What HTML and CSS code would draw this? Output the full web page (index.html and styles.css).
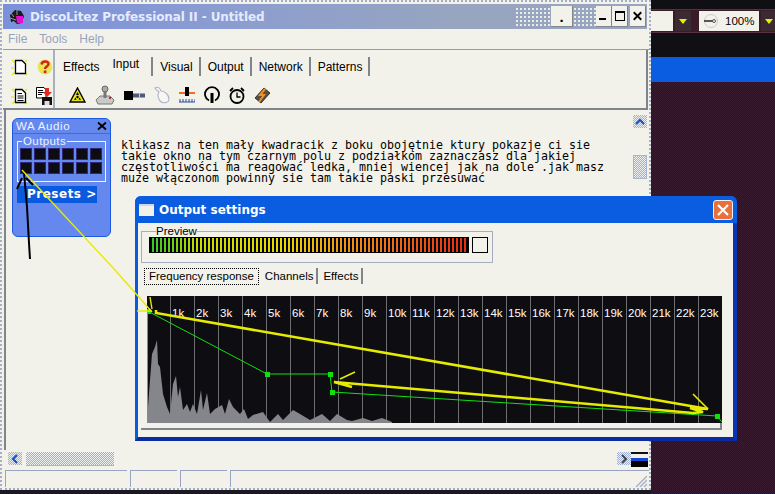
FILE: index.html
```html
<!DOCTYPE html>
<html lang="en">
<head>
    <meta charset="UTF-8">
    <title>DiscoLitez Professional II - Untitled</title>
    <link rel="stylesheet" href="styles.css">
</head>
<body>
<div class="page">
    <div class="app">
        <div class="titlebar">
            <svg class="app-icon" width="18" height="18" viewBox="0 0 18 18">
                <path d="M2 7 L7 2 L13 3 L16 8 L14 15 L9 16 L6 13 L3 14 Z" fill="#1a1a1a"/>
                <path d="M8 8 h7 v7 h-6 z" fill="#e010d0"/>
                <path d="M3 5 L6 9 M9 2 V7 M2 10 L8 12" stroke="#999" stroke-width="1"/>
            </svg>
            <span class="app-title">DiscoLitez Professional II - Untitled</span>
            <span class="dots dots-a"></span>
            <span class="win-btn win-help">.</span>
            <span class="dots dots-b"></span>
            <span class="win-btn win-ctl">
                <svg width="15" height="20" viewBox="0 0 15 20"><rect x="3" y="12" width="7" height="2" fill="#000"/></svg>
            </span>
            <span class="win-btn win-ctl">
                <svg width="15" height="20" viewBox="0 0 15 20"><rect x="3.500" y="5.500" width="9" height="9" fill="none" stroke="#000"/><rect x="3" y="5" width="10" height="2" fill="#000"/></svg>
            </span>
            <span class="win-btn win-ctl win-close">
                <svg width="16" height="20" viewBox="0 0 16 20"><path d="M4 6 L12 14 M12 6 L4 14" stroke="#000" stroke-width="2"/></svg>
            </span>
        </div>

        <div class="menubar">
            <span>File</span><span>Tools</span><span>Help</span>
        </div>

        <div class="toolbar">
            <div class="quick">
                <svg width="18" height="20" viewBox="0 0 18 20">
                    <path d="M1 3 L4 6 M16 3 L14 5 M0 11 H3 M1 18 L4 15 M16 18 L14 15" stroke="#e4ea20" stroke-width="1.500"/>
                    <path d="M4.500 3.500 H11 L14.500 7 V16.500 H4.500 Z" fill="#fff" stroke="#000" stroke-width="1.300"/>
                </svg>
                <svg width="16" height="18" viewBox="0 0 16 18">
                    <circle cx="8" cy="9" r="7.500" fill="#e6e85a"/>
                    <path d="M4.500 6.500 C5 2.500 11.500 2.500 11.500 6 C11.500 8.500 8 8.500 8 11" fill="none" stroke="#d8201c" stroke-width="2.400"/>
                    <rect x="6.800" y="12.500" width="2.600" height="2.600" fill="#d8201c"/>
                </svg>
                <svg width="18" height="20" viewBox="0 0 18 20">
                    <path d="M1 3 L4 6 M16 3 L14 5 M0 11 H3 M1 18 L4 15 M16 18 L14 15" stroke="#e4ea20" stroke-width="1.500"/>
                    <path d="M4.500 3.500 H11 L14.500 7 V16.500 H4.500 Z" fill="#fff" stroke="#000" stroke-width="1.300"/>
                    <path d="M6.500 7.500 H11 M6.500 10 H12.500 M6.500 12 H12.500 M6.500 14.500 H12.500" stroke="#000"/>
                </svg>
                <svg width="19" height="20" viewBox="0 0 19 20">
                    <path d="M1.500 1.500 H9 L11 4 V12 H1.500 Z" fill="#fff" stroke="#000"/>
                    <path d="M3 4.500 H8 M3 6.500 H9 M3 8.500 H7" stroke="#000"/>
                    <rect x="7" y="11" width="10" height="8" fill="#111"/>
                    <rect x="9.500" y="15" width="5" height="4" fill="#ddd"/>
                    <path d="M10 2 H14 V6 H17 L12 11 L8 6 H10 Z" fill="#e02a20"/>
                </svg>
            </div>
            <div class="toolarea">
                <div class="tabs">
                    <span class="tab tab-effects">Effects</span>
                    <span class="tab tab-input">Input</span>
                    <span class="tab tab-sep">Visual</span>
                    <span class="tab tab-sep">Output</span>
                    <span class="tab tab-sep">Network</span>
                    <span class="tab tab-sep">Patterns</span>
                </div>
                <div class="tool-icons">
                    <svg width="17" height="16" viewBox="0 0 17 16">
                        <path d="M8.500 1 L16 15 H1 Z" fill="#e2e020" stroke="#000" stroke-width="1.400"/>
                        <circle cx="8.500" cy="10" r="1.200" fill="#000"/>
                        <path d="M8.500 5 L7 8 H10 Z M5 13 L6.500 10.500 L7.500 12.500 Z M12 13 L10.500 10.500 L9.500 12.500 Z" fill="#000"/>
                    </svg>
                    <svg width="20" height="20" viewBox="0 0 20 20">
                        <path d="M1 15 L5 11 H15 L19 15 L17 19 H3 Z" fill="#c9c9c9" stroke="#777"/>
                        <rect x="8.500" y="5" width="3" height="8" fill="#777"/>
                        <circle cx="10" cy="4" r="3" fill="#aaa" stroke="#666"/>
                        <rect x="14" y="12" width="2" height="2" fill="#c22"/>
                    </svg>
                    <svg width="21" height="9" viewBox="0 0 21 9">
                        <rect x="0" y="0" width="9" height="9" fill="#000"/>
                        <rect x="9" y="2.500" width="12" height="4" fill="#4d5a78"/>
                        <rect x="15" y="2.500" width="1" height="4" fill="#ccd"/>
                    </svg>
                    <svg width="16" height="18" viewBox="0 0 16 18">
                        <path d="M1 2 C4 0 6 2 7 5 C11 5 15 9 15 13 C15 17 9 18 6 15 C4 12 3 9 5 6 C3 4 2 4 1 2 Z" fill="#f6f6f2" stroke="#aab4c8" stroke-width="1.100"/>
                    </svg>
                    <svg width="16" height="16" viewBox="0 0 16 16">
                        <rect x="0" y="5" width="16" height="2" fill="#f07020"/>
                        <rect x="6" y="0" width="4" height="9" fill="#000"/>
                        <path d="M0 15 H16 M1 12 V15 M4 12 V15 M7 12 V15 M10 12 V15 M13 12 V15 M16 12 V15" stroke="#284aa0"/>
                    </svg>
                    <svg width="16" height="18" viewBox="0 0 16 18">
                        <path d="M5 14.500 A7 7 0 1 1 11 14.500" fill="none" stroke="#000" stroke-width="1.800"/>
                        <path d="M8 7 V17" stroke="#000" stroke-width="3"/>
                    </svg>
                    <svg width="16" height="17" viewBox="0 0 16 17">
                        <circle cx="8" cy="9.500" r="6.500" fill="#f3f2ea" stroke="#000" stroke-width="1.800"/>
                        <path d="M8 5.500 V10 H11.500" fill="none" stroke="#000" stroke-width="1.300"/>
                        <path d="M1 4 L4 1 M15 4 L12 1" stroke="#000" stroke-width="1.800"/>
                    </svg>
                    <svg width="17" height="17" viewBox="0 0 17 17">
                        <path d="M1 11 L10 1 L16 6 L7 16 Z" fill="#5a5040" stroke="#333"/>
                        <path d="M11 2 L6 8 H10 L5 15" fill="none" stroke="#f09020" stroke-width="2"/>
                    </svg>
                </div>
            </div>
        </div>

        <div class="client">
            <div class="workspace">
                <div class="wa-panel">
                    <div class="wa-head">
                        <span>WA Audio</span>
                        <svg width="10" height="10" viewBox="0 0 10 10"><path d="M1 1.500 L9 8.500 M9 1.500 L1 8.500" stroke="#000" stroke-width="1.800"/></svg>
                    </div>
                    <fieldset class="wa-outputs">
                        <legend>Outputs</legend>
                        <div class="wa-grid">
                            <i></i><i></i><i></i><i></i><i></i><i></i>
                            <i></i><i></i><i></i><i></i><i></i><i></i>
                        </div>
                    </fieldset>
                    <div class="wa-presets">Presets &gt;</div>
                </div>
                <p class="note">klikasz na ten mały kwadracik z boku obojętnie ktury pokazje ci sie<br>takie okno na tym czarnym polu z podziałkom zaznaczasz dla jakiej<br>częstotliwości ma reagować ledka, mniej wiencej jak na dole .jak masz<br>muze włączonom powinny sie tam takie paski przesuwać</p>
            </div>
            <div class="vscroll">
                <span class="sb-btn">
                    <svg width="12" height="12" viewBox="0 0 12 12"><path d="M2 8 L6 4 L10 8" fill="none" stroke="#1a4fc0" stroke-width="2"/></svg>
                </span>
                <span class="sb-thumb-v"></span>
            </div>
            <div class="hscroll">
                <span class="sb-btn">
                    <svg width="12" height="12" viewBox="0 0 12 12"><path d="M8 2 L4 6 L8 10" fill="none" stroke="#1a4fc0" stroke-width="2"/></svg>
                </span>
                <span class="sb-thumb-h"></span>
                <span class="hscroll-fill"></span>
                <span class="sb-btn">
                    <svg width="12" height="12" viewBox="0 0 12 12"><path d="M4 2 L8 6 L4 10" fill="none" stroke="#444" stroke-width="2"/></svg>
                </span>
            </div>
            <div class="corner"></div>
        </div>

        <div class="statusbar">
            <span class="pane pane-a"></span>
            <span class="pane pane-b"></span>
            <span class="pane pane-b"></span>
            <span class="pane pane-c">
                <svg class="grip" width="12" height="12" viewBox="0 0 12 12"><path d="M12 1 L1 12 M12 5 L5 12 M12 9 L9 12" stroke="#a6adbe" stroke-width="1.300"/></svg>
            </span>
        </div>
    </div>

    <div class="side">
        <div class="side-top"></div>
        <div class="side-bar">
            <span class="side-input"></span>
            <span class="side-drop"><b></b></span>
            <span class="side-zoom">
                <svg width="16" height="14" viewBox="0 0 16 14"><circle cx="8" cy="7" r="6.500" fill="none" stroke="#c6cad6"/><path d="M1 7 H10" stroke="#555" stroke-width="2"/><circle cx="11" cy="7" r="1.500" fill="none" stroke="#555"/></svg>
                100%
            </span>
            <span class="side-drop"><b></b></span>
        </div>
        <div class="side-dark"></div>
        <div class="side-blue"></div>
        <div class="side-noise"></div>
    </div>
</div>

<div class="output-win">
    <div class="out-title">
        <span class="out-icon"></span>
        <span class="out-name">Output settings</span>
        <span class="out-close">
            <svg width="14" height="14" viewBox="0 0 14 14"><path d="M2 2 L12 12 M12 2 L2 12" stroke="#fff" stroke-width="2.200"/></svg>
        </span>
    </div>
    <div class="out-body">
        <fieldset class="preview">
            <legend>Preview</legend>
            <div class="preview-row">
                <div class="meter"></div>
                <div class="swatch"></div>
            </div>
        </fieldset>
        <div class="out-tabs">
            <span class="out-tab out-tab-on">Frequency response</span>
            <span class="out-tab">Channels</span>
            <span class="out-tab">Effects</span>
        </div>
        <div class="graph-panel">
            <div class="graph">
                <div class="graph-cols">
                    <span></span><span>1k</span><span>2k</span><span>3k</span><span>4k</span><span>5k</span><span>6k</span><span>7k</span><span>8k</span><span>9k</span><span>10k</span><span>11k</span><span>12k</span><span>13k</span><span>14k</span><span>15k</span><span>16k</span><span>17k</span><span>18k</span><span>19k</span><span>20k</span><span>21k</span><span>22k</span><span>23k</span>
                </div>
                <svg class="graph-plot" width="575" height="127" viewBox="147 299 575 127">
                    <path fill="#85858c" d="M147 426 L148 410 L150 383 L152 357 L155 350 L157 343 L158 367 L160 370 L163 397 L167 410 L170 417 L173 387 L176 379 L178 400 L180 390 L183 413 L187 407 L190 415 L193 407 L197 417 L201 393 L203 413 L207 396 L210 417 L215 412 L222 408 L225 417 L229 402 L233 410 L240 417 L244 412 L248 422 L253 418 L263 415 L270 425 L278 417 L283 423 L293 413 L300 417 L310 423 L322 417 L330 424 L337 417 L347 423 L352 424 L363 421 L372 424 L382 421 L392 425 L392 426 Z"/>
                    <path fill="none" stroke="#10e010" stroke-width="1" d="M147.500 426 V314 L267 377 H330 L332 395 L717 419 L722 425"/>
                    <rect x="146" y="312" width="5" height="5" fill="#10e010"/>
                    <rect x="265" y="375" width="5" height="5" fill="#10e010"/>
                    <rect x="328" y="375" width="5" height="5" fill="#10e010"/>
                    <rect x="330" y="393" width="5" height="5" fill="#10e010"/>
                    <rect x="715" y="417" width="5" height="5" fill="#10e010"/>
                </svg>
            </div>
        </div>
    </div>
</div>

<svg class="marks" width="775" height="494" viewBox="0 0 775 494">
    <path fill="none" stroke="#000" stroke-width="2" d="M30 259 L29 243 L27 207 L24 173 M17 189 L22 178 M33 185 L26 178"/>
    <path fill="none" stroke="#e6ec00" stroke-width="1.400" d="M22 170 L115 270 L152 312 M150 297 L152 309 M137 311 H152"/>
    <path fill="none" stroke="#e6ec00" stroke-width="2.600" d="M156 310 V313 L708 409 L690 408 L703 412 L693 413 L334 382 L352 387"/>
    <path fill="none" stroke="#e6ec00" stroke-width="1.600" d="M340 379 L355 372 M693 394 L708 409"/>
</svg>
</body>
</html>
```

FILE: styles.css
```css
* {
    box-sizing: border-box;
}
html, body {
    margin: 0;
    padding: 0;
    background: #1c1822;
    overflow: hidden;
}
body {
    width: 775px;
    height: 494px;
    position: relative;
    font-family: "Liberation Sans", Arial, sans-serif;
}
.page {
    display: flex;
    width: 775px;
    height: 494px;
}

/* main window */
.app {
    width: 651px;
    height: 490px;
    flex: none;
    display: flex;
    flex-direction: column;
    background: #f3f2ea;
    border: 2px dotted #a4aec6;
    padding: 2px 0 0 1px;
}
.titlebar {
    height: 25px;
    flex: none;
    display: flex;
    align-items: center;
    margin-right: 2px;
    padding-left: 5px;
    background: linear-gradient(90deg, #7b90dc 0, #8b9dd0 35%, #97a5c0 70%, #97a5c0 100%);
}
.app-icon {
    margin-right: 4px;
}
.app-title {
    color: #e4ebff;
    font-family: "DejaVu Sans", sans-serif;
    font-size: 12px;
    font-weight: bold;
    letter-spacing: -0.1px;
    white-space: nowrap;
}
.dots {
    height: 20px;
    background-image: radial-gradient(#f3f2ea 0.7px, transparent 0.8px);
    background-size: 4px 4px;
}
.dots-a {
    width: 36px;
    margin-left: auto;
}
.dots-b {
    width: 23px;
}
.win-btn {
    height: 21px;
    display: flex;
    align-items: flex-start;
    justify-content: center;
    background: #f3f2ea;
    border-right: 1px solid #80848c;
    border-bottom: 1px solid #80848c;
}
.win-help {
    width: 22px;
    font-size: 15px;
    font-weight: bold;
    color: #000;
    line-height: 22px;
}
.win-ctl {
    width: 16px;
}
.win-close {
    margin-left: 2px;
    margin-right: 1px;
}
.menubar {
    height: 21px;
    flex: none;
    display: flex;
    align-items: center;
    gap: 12px;
    padding-left: 5px;
    color: #97a3bd;
    font-size: 12px;
    border-bottom: 1px solid #8c9cbc;
}
.toolbar {
    height: 60px;
    flex: none;
    display: flex;
    margin-right: 1px;
    border-bottom: 2px solid #80848c;
    border-right: 2px solid #80848c;
}
.quick {
    width: 52px;
    flex: none;
    display: grid;
    grid-template-columns: 25px 25px;
    grid-template-rows: 33px 26px;
    align-items: center;
    justify-items: center;
    padding: 0 0 0 4px;
    border-right: 2px solid #a8b0c0;
}
.toolarea {
    display: flex;
    flex-direction: column;
}
.tabs {
    display: flex;
    height: 33px;
    align-items: center;
    font-size: 12px;
    color: #000;
}
.tab {
    height: 19px;
    line-height: 20px;
    padding: 0 6px 0 7px;
    border-right: 2px solid #80848c;
}
.tab-effects {
    padding: 0 6px 0 8px;
    border-right: none;
}
.tab-input {
    margin-left: 7px;
    line-height: 15px;
    padding: 0 12px 0 0;
}
.tool-icons {
    display: flex;
    align-items: center;
    gap: 9px;
    padding-left: 14px;
    height: 24px;
}

/* client area */
.client {
    flex: 1;
    display: grid;
    grid-template-columns: 1fr 18px;
    grid-template-rows: 1fr 20px;
    padding-left: 1px;
}
.workspace {
    display: flex;
    align-items: flex-start;
    padding: 8px 0 0 6px;
    border-left: 2px solid #80848c;
}
.wa-panel {
    width: 99px;
    height: 119px;
    flex: none;
    background: #6488ee;
    border: 1px solid #1a5ae0;
    border-radius: 6px;
    padding: 0 4px;
    color: #f0f4ff;
}
.wa-head {
    height: 15px;
    margin: 0 -4px;
    padding: 0 3px;
    display: flex;
    align-items: center;
    justify-content: space-between;
    font-size: 11.500px;
    letter-spacing: 0.600px;
    border-bottom: 1px solid #3c6ae8;
}
.wa-outputs {
    margin: 3px 0 0 0;
    padding: 3px 0 0 3px;
    height: 45px;
    border: 1px solid #f0f4ff;
}
.wa-outputs legend {
    padding: 0 1px;
    margin-left: 1px;
    font-size: 11.500px;
    line-height: 9px;
    letter-spacing: 0.400px;
}
.wa-grid {
    display: grid;
    grid-template-columns: repeat(6, 10px);
    grid-auto-rows: 10px;
    gap: 4px;
}
.wa-grid i {
    background: #0c0c12;
    outline: 1px solid #32287a;
}
.wa-presets {
    width: 80px;
    height: 17px;
    margin-top: 4px;
    background: #0a5ae0;
    color: #fff;
    font-family: "DejaVu Sans", sans-serif;
    font-size: 12px;
    font-weight: bold;
    letter-spacing: 0.500px;
    line-height: 17px;
    padding-left: 10px;
}
.note {
    margin: 22px 0 0 10px;
    font-family: "DejaVu Sans Mono", monospace;
    font-size: 11.630px;
    line-height: 11px;
    color: #000;
    white-space: nowrap;
}
.vscroll {
    padding-top: 5px;
    padding-left: 2px;
    display: flex;
    flex-direction: column;
    gap: 27px;
}
.sb-btn {
    width: 14px;
    height: 13px;
    flex: none;
    display: flex;
    align-items: center;
    justify-content: center;
    background: repeating-conic-gradient(#9fb0d4 0 25%, #eef0f0 0 50%) 0 0 / 2px 2px;
}
.sb-thumb-v {
    width: 14px;
    height: 24px;
    background: repeating-conic-gradient(#9fb0d4 0 25%, #eef0f0 0 50%) 0 0 / 2px 2px;
    border: 1px solid #a8b4d0;
}
.hscroll {
    display: flex;
    align-items: flex-start;
    padding: 2px 0 0 4px;
}
.sb-thumb-h {
    width: 88px;
    height: 14px;
    margin-left: 4px;
    background: repeating-conic-gradient(#9fb0d4 0 25%, #eef0f0 0 50%) 0 0 / 2px 2px;
    border-bottom: 1px solid #a8b4d0;
}
.hscroll-fill {
    flex: 1;
}
.corner {
    background: linear-gradient(#111 0 2px, #f3f2ea 2px 6px, #1148d8 6px 9px, #000 9px 15px, transparent 15px);
    margin: 2px 1px 0 0;
}
.statusbar {
    height: 18px;
    flex: none;
    display: flex;
    gap: 3px;
    padding-left: 2px;
}
.pane {
    border-top: 1px solid #97a5c3;
    border-left: 1px solid #97a5c3;
    height: 17px;
}
.pane-a {
    width: 122px;
}
.pane-b {
    width: 47px;
}
.pane-c {
    flex: 1;
    display: flex;
    justify-content: flex-end;
    align-items: flex-end;
    padding-right: 2px;
}

/* background app on the right */
.side {
    flex: 1;
    display: flex;
    flex-direction: column;
    background: #100f14;
}
.side-top {
    height: 9px;
}
.side-bar {
    height: 24px;
    display: flex;
    align-items: center;
    background: #3a1c28;
    border-top: 1px solid #5a3040;
    border-bottom: 1px solid #5a3040;
}
.side-input {
    width: 22px;
    height: 20px;
    background: #f3f2ea;
}
.side-drop {
    width: 16px;
    height: 20px;
    margin: 0 8px 0 2px;
    display: flex;
    align-items: center;
    justify-content: center;
    background: #3a2a32;
}
.side-drop b {
    width: 0;
    height: 0;
    border-left: 4px solid transparent;
    border-right: 4px solid transparent;
    border-top: 5px solid #e8f000;
}
.side-zoom {
    width: 60px;
    height: 20px;
    display: flex;
    align-items: center;
    gap: 6px;
    padding-left: 4px;
    background: #f3f2ea;
    font-size: 11.500px;
    color: #000;
}
.side-dark {
    height: 24px;
}
.side-blue {
    height: 25px;
    background: #0a5ce0;
}
.side-noise {
    flex: 1;
    background: repeating-conic-gradient(#3a1c30 0 25%, #16163e 0 50%) 0 0 / 2px 2px;
}

/* floating output settings window */
.output-win {
    position: absolute;
    left: 135px;
    top: 196px;
    width: 602px;
    height: 245px;
    background: #f3f2ea;
    border-radius: 6px 6px 0 0;
    border-left: 3px solid #0a5ae0;
    border-right: 4px solid #0a34b0;
    border-bottom: 4px solid #0a2aa0;
}
.out-title {
    height: 27px;
    margin-left: -3px;
    margin-right: -4px;
    padding: 0 4px 0 4px;
    display: flex;
    align-items: center;
    background: #0a5ce0;
    border-radius: 6px 6px 0 0;
}
.out-icon {
    width: 15px;
    height: 12px;
    margin-right: 5px;
    background: #f3f2ea;
    border-top: 2px solid #c8d8f8;
}
.out-name {
    color: #fff;
    font-family: "DejaVu Sans", sans-serif;
    font-size: 12px;
    font-weight: bold;
}
.out-close {
    width: 20px;
    height: 20px;
    margin-left: auto;
    display: flex;
    align-items: center;
    justify-content: center;
    background: #e8703c;
    border: 1px solid #f3f2ea;
    border-radius: 3px;
}
.out-body {
    padding: 0 3px 0 3px;
}
.preview {
    width: 352px;
    height: 37px;
    margin: 3px 0 0 0;
    padding: 0 0 0 7px;
    border: 1px solid #a4aec0;
}
.preview legend {
    font-size: 11.500px;
    line-height: 10px;
    padding: 0;
    margin-left: 7px;
}
.preview-row {
    display: flex;
    gap: 3px;
    margin-top: 1px;
}
.meter {
    width: 320px;
    height: 16px;
    border: 1px solid #000;
    background:
        repeating-linear-gradient(90deg, #000 0 2px, transparent 2px 4px),
        linear-gradient(90deg, #30c828 0, #78d010 8%, #c8dc00 15%, #e8d800 42%, #f0a010 58%, #ee7018 75%, #e82c10 100%);
}
.swatch {
    width: 16px;
    height: 16px;
    border: 1px solid #000;
    background: #f3f2ea;
}
.out-tabs {
    display: flex;
    align-items: flex-start;
    height: 33px;
    padding: 5px 0 0 3px;
    font-size: 11.500px;
}
.out-tab {
    height: 16px;
    line-height: 17px;
    padding: 0 3px 0 5px;
    border-right: 2px solid #80848c;
}
.out-tab-on {
    height: 17px;
    line-height: 15px;
    padding: 0 4px;
    border: 1px dotted #000;
    margin-right: 1px;
}
.graph-panel {
    height: 134px;
    margin-right: 8px;
    padding-left: 6px;
    border-bottom: 2px solid #80848c;
    border-right: 2px solid #80848c;
}
.graph {
    position: relative;
    width: 575px;
    height: 127px;
    background: #0e0e12;
    overflow: hidden;
}
.graph-cols {
    display: flex;
    height: 127px;
}
.graph-cols span {
    width: 24px;
    flex: none;
    border-right: 1px solid #6e6e6e;
    color: #fff;
    font-size: 11.500px;
    line-height: 12px;
    padding-top: 11px;
    white-space: nowrap;
    text-indent: 1px;
}
.graph-plot {
    position: absolute;
    left: 0;
    top: 0;
}
.marks {
    position: absolute;
    left: 0;
    top: 0;
    pointer-events: none;
}
```
